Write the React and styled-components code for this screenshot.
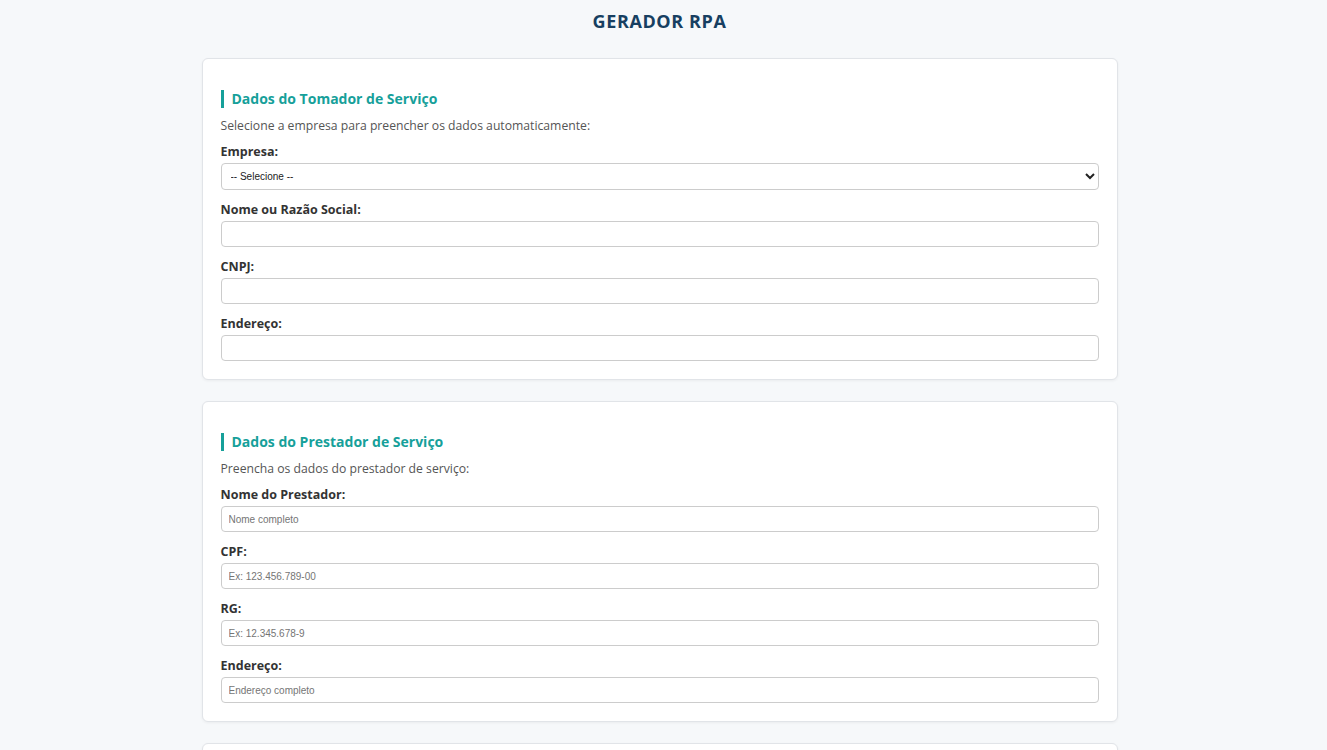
import styled, { createGlobalStyle } from 'styled-components'

const GlobalStyle = createGlobalStyle`
  * { box-sizing: border-box; }
  body {
    margin: 0;
    padding-right: 8px;
    background: #f6f8fa;
    font-family: "Open Sans", "DejaVu Sans", sans-serif;
    color: #333;
  }
`

const Page = styled.div`
  max-width: 916px;
  margin: 0 auto;
  padding: 9px 0 30px;
`

const Title = styled.h1`
  margin: 0 0 25px;
  text-align: center;
  font-size: 18px;
  line-height: 24px;
  font-weight: 700;
  color: #173f61;
  letter-spacing: 0.6px;
`

const Card = styled.section`
  background: #fff;
  border: 1px solid #e1e4e8;
  border-radius: 6px;
  box-shadow: 0 1px 3px rgba(0, 0, 0, 0.05);
  padding: 31px 18px 18px;
  margin-bottom: 21px;
`

const Heading = styled.h2`
  margin: 0 0 9px;
  padding-left: 8px;
  border-left: 3px solid #16a09a;
  font-size: 14px;
  line-height: 18px;
  font-weight: 700;
  color: #16a09a;
`

const Hint = styled.p`
  margin: 0 0 9px;
  font-size: 12.2px;
  line-height: 18px;
  color: #555;
`

const Field = styled.div`
  display: flex;
  flex-direction: column;
  & + & {
    margin-top: 12px;
  }
`

const Label = styled.label`
  font-size: 12.5px;
  line-height: 16px;
  font-weight: 700;
  color: #333;
  margin-bottom: 3px;
`

const Input = styled.input`
  height: 26px;
  border: 1px solid #ccc;
  border-radius: 4px;
  padding: 0 7px;
  font-family: "Liberation Sans", Arial, sans-serif;
  font-size: 10px;
  color: #333;
  background: #fff;
  &::placeholder {
    color: #757575;
  }
  &:focus {
    outline: none;
  }
`

const Select = styled.select`
  height: 27px;
  border: 1px solid #ccc;
  border-radius: 4px;
  padding: 0 5px;
  font-family: "Liberation Sans", Arial, sans-serif;
  font-size: 10px;
  color: #222;
  background: #fff;
`

const tomador = [
  { id: 'nome', label: 'Nome ou Razão Social:' },
  { id: 'cnpj', label: 'CNPJ:' },
  { id: 'endTomador', label: 'Endereço:' },
]

const prestador = [
  { id: 'nomePrest', label: 'Nome do Prestador:', ph: 'Nome completo' },
  { id: 'cpf', label: 'CPF:', ph: 'Ex: 123.456.789-00' },
  { id: 'rg', label: 'RG:', ph: 'Ex: 12.345.678-9' },
  { id: 'endPrest', label: 'Endereço:', ph: 'Endereço completo' },
]

const App = () => {
  return (
    <>
      <GlobalStyle />
      <Page>
        <Title>GERADOR RPA</Title>
        <Card>
          <Heading>Dados do Tomador de Serviço</Heading>
          <Hint>Selecione a empresa para preencher os dados automaticamente:</Hint>
          <Field>
            <Label htmlFor="empresa">Empresa:</Label>
            <Select id="empresa" defaultValue="">
              <option value="">-- Selecione --</option>
            </Select>
          </Field>
          {tomador.map((f) => (
            <Field key={f.id}>
              <Label htmlFor={f.id}>{f.label}</Label>
              <Input id={f.id} type="text" />
            </Field>
          ))}
        </Card>
        <Card>
          <Heading>Dados do Prestador de Serviço</Heading>
          <Hint>Preencha os dados do prestador de serviço:</Hint>
          {prestador.map((f) => (
            <Field key={f.id}>
              <Label htmlFor={f.id}>{f.label}</Label>
              <Input id={f.id} type="text" placeholder={f.ph} />
            </Field>
          ))}
        </Card>
        <Card>
          <Heading>Dados do Serviço</Heading>
        </Card>
      </Page>
    </>
  )
}

export default App
